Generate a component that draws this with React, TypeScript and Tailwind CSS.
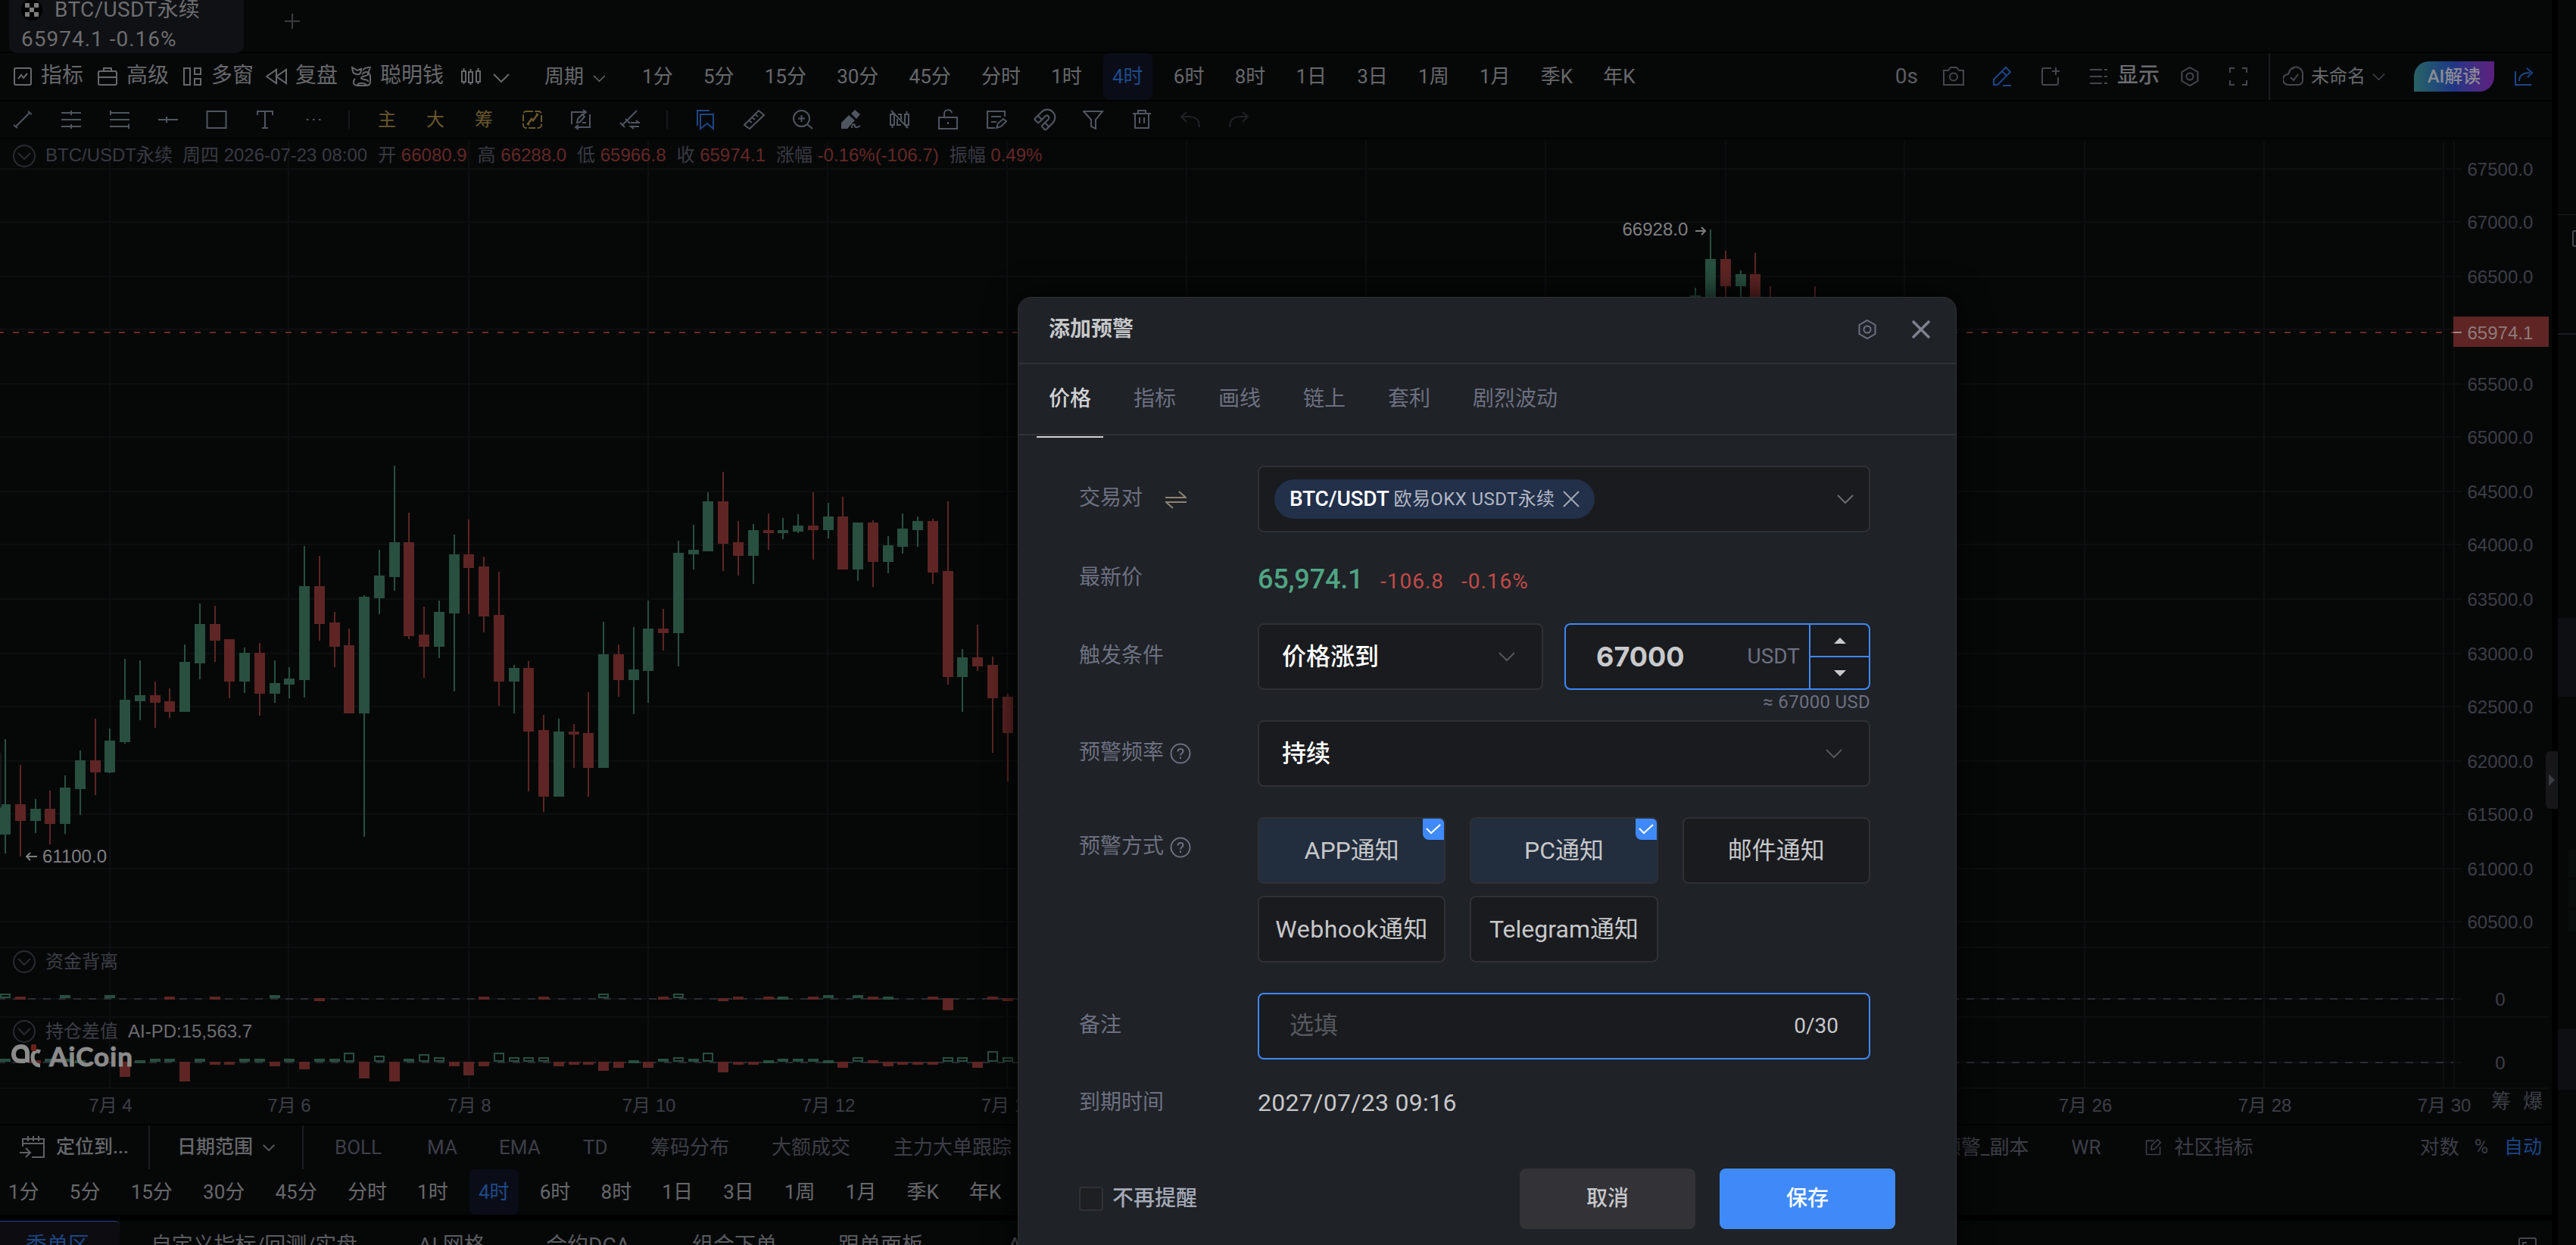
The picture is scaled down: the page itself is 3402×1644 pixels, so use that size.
import React from 'react';
import { Magnet } from 'lucide-react';

type IconProps = { children: React.ReactNode; className?: string; size?: string };

function Icon({ children, className = '', size = 'h-7 w-7' }: IconProps) {
  return (
    <svg
      viewBox="0 0 28 28"
      fill="none"
      stroke="currentColor"
      strokeWidth="2"
      className={`shrink-0 ${size} ${className}`}
    >
      {children}
    </svg>
  );
}

const hexagon = (
  <>
    <path d="M14 2l10.5 6v12L14 26 3.5 20V8z" />
    <circle cx="14" cy="14" r="4.5" />
  </>
);

function Chevron({ className }: { className: string }) {
  return (
    <svg viewBox="0 0 22 12" fill="none" stroke="currentColor" strokeWidth="2" className={`shrink-0 ${className}`}>
      <path d="M1 1l10 10L21 1" />
    </svg>
  );
}

const PERIODS = ['1分', '5分', '15分', '30分', '45分', '分时', '1时', '4时', '6时', '8时', '1日', '3日', '1周', '1月', '季K', '年K'];

function Periods({ className = '' }: { className?: string }) {
  return (
    <div className={`flex h-full gap-[16.2px] text-[26px] text-[#67686b] ${className}`}>
      {PERIODS.map((p) => (
        <div
          key={p}
          className={`flex items-center rounded-lg px-3 ${p === '4时' ? 'bg-[#0a0d17] text-[#1f4a8a]' : ''}`}
        >
          {p}
        </div>
      ))}
    </div>
  );
}

/* ---------- top bars ---------- */

function TabBar() {
  return (
    <div className="flex h-[68px] shrink-0 bg-[#060808]">
      <div className="relative z-10 ml-3 h-[70px] w-[310px] rounded-b-[10px] bg-[#101114] pl-4 text-[28px] leading-[38px] text-[#6c6d70]">
        <div className="-mt-[6px] flex items-center">
          <svg viewBox="0 0 28 28" className="mr-4 h-7 w-7">
            <circle cx="14" cy="14" r="14" fill="#000" />
            <path d="M5 5h6v6H5zM17 5h6v6h-6zM11 11h6v6h-6zM5 17h6v6H5zM17 17h6v6h-6z" fill="#7d7d7d" />
          </svg>
          <span className="tracking-[0.35px]">BTC/USDT永续</span>
        </div>
        <div className="mt-px tracking-[1px]">65974.1 -0.16%</div>
      </div>
      <svg viewBox="0 0 20 20" className="mt-[18px] ml-[54px] h-5 w-5" stroke="#3a3c40" strokeWidth="2">
        <path d="M10 0v20M0 10h20" />
      </svg>
    </div>
  );
}

function ChartToolbar() {
  return (
    <div className="mt-0.5 flex h-[62px] shrink-0 items-center bg-[#060808] pl-4 text-[28px] whitespace-nowrap text-[#67686b]">
      <Icon>
        <rect x="3" y="3" width="22" height="22" rx="2" />
        <path d="M8 17l4-5 3 4 5-6" />
      </Icon>
      <span className="-mt-0.5 ml-[10px]">指标</span>
      <Icon className="ml-[18px]">
        <rect x="2" y="7" width="24" height="18" rx="2" />
        <path d="M9 7V3h10v4M2 15h24" />
      </Icon>
      <span className="-mt-0.5 ml-[11px]">高级</span>
      <Icon className="ml-[17px]">
        <rect x="3" y="3" width="8" height="22" />
        <rect x="17" y="3" width="8" height="8" />
        <rect x="17" y="17" width="8" height="8" />
      </Icon>
      <span className="-mt-0.5 ml-[11px]">多窗</span>
      <Icon className="ml-4">
        <path d="M14 5v18L1 14zM27 5v18L14 14z" />
      </Icon>
      <span className="-mt-0.5 ml-[11px]">复盘</span>
      <Icon className="ml-[18px]">
        <path d="M1 2c1 7 1 8 6 9s6-3 6-7l-5 2zM15 6c2-3 4-4 11-4M14 11c5-5 9-3 8 0s-9 2-9 5 10 1 9 5M25 4c-4 3-2 6 0 9v8c0 4-3 5-6 5H8c-5 0-7-5-3-9" />
        <path d="M8 25c2-3 9-3 12 0" />
      </Icon>
      <span className="-mt-0.5 ml-[10px]">聪明钱</span>
      <Icon className="ml-[22px]">
        <rect x="2" y="7" width="5" height="14" />
        <rect x="11" y="8" width="5" height="14" />
        <rect x="21" y="7" width="5" height="14" />
        <path d="M4.5 3v4M4.5 21v3M13.5 4v4M13.5 22v3M23.5 3v4M23.5 21v3" />
      </Icon>
      <Chevron className="mt-1 ml-[15px] h-3 w-[22px]" />
      <span className="ml-[46px] text-[26px]">周期</span>
      <Chevron className="mt-1 ml-3 h-[9px] w-[17px]" />
      <Periods className="ml-9" />
      <div className="flex-1" />
      <span className="text-[#5c5d60]">0s</span>
      <div className="ml-[33px] flex items-center text-[#44464c]">
        <Icon>
          <path d="M1 6h6l3-4h8l3 4h6v19H1z" />
          <circle cx="14" cy="14.5" r="5" />
        </Icon>
        <Icon className="ml-[36px] text-[#1d4684]">
          <path d="M3 25v-7L19 2l6 6L8 25zM14 7l6 6M15 26h11" />
        </Icon>
        <Icon className="ml-[36px]">
          <path d="M15 3H5a2 2 0 0 0-2 2v18a2 2 0 0 0 2 2h17a2 2 0 0 0 2-2v-8M21 2v10M16 7h10" />
        </Icon>
        <Icon className="ml-[36px]">
          <path d="M2 5h16M2 14h16M2 23h16M21 5h4M21 14h4M21 23h4" />
        </Icon>
        <span className="-mt-0.5 ml-[10px] font-medium text-[#6b6c6e]">显示</span>
        <Icon className="ml-[26px]">{hexagon}</Icon>
        <Icon className="ml-[36px]">
          <path d="M9 3H3v6M19 3h6v6M9 25H3v-6M19 25h6v-6" />
        </Icon>
        <div className="ml-[26px] h-[62px] w-0.5 bg-[#1b1c1f]" />
        <Icon className="ml-[17px]">
          <path d="M8 10a9 9 0 0 1 18 1v8a6 6 0 0 1-6 6H7a6.500 6.500 0 0 1 0-14c1-5 4-8 8-8M10 15l4 4 6-8" />
        </Icon>
        <span className="ml-[9px] text-[24px] text-[#67686b]">未命名</span>
        <Chevron className="ml-[9px] h-[9px] w-[17px]" />
        <div className="ml-[38px] flex h-10 w-[106px] items-center justify-center rounded-tl-[20px] rounded-br-[20px] bg-linear-to-r from-[#296264] via-[#203585] to-[#5c1f80] text-[24px] font-medium text-[#8a8b94]">
          AI解读
        </div>
        <Icon className="mr-[23px] ml-[25px] text-[#1d4684]">
          <path d="M3 7v18h21M8 20c0-8 5-11 14-11M18 3l7 6-6 6" />
        </Icon>
      </div>
    </div>
  );
}

function Cell({ children, className = '' }: { children: React.ReactNode; className?: string }) {
  return <div className={`flex w-16 shrink-0 items-center justify-center ${className}`}>{children}</div>;
}

function DrawingToolbar() {
  return (
    <div className="mt-0.5 flex h-12 shrink-0 items-center bg-[#060808] text-[24px] text-[#4f5560]">
      <div className="-ml-0.5 flex items-center">
        <Cell>
          <Icon>
            <path d="M5 23L23 5M2 21l5 4M21 3l5 4" />
          </Icon>
        </Cell>
        <Cell>
          <Icon>
            <path d="M1 5h26M1 14h26M1 23h26M14 2v6M14 20v6" />
          </Icon>
        </Cell>
        <Cell>
          <Icon>
            <path d="M1 5h26M1 14h26M1 23h26M2 2v6M26 20v6" />
          </Icon>
        </Cell>
        <Cell>
          <Icon>
            <path d="M1 14h26M12 10v8" />
          </Icon>
        </Cell>
        <Cell>
          <Icon>
            <rect x="1.5" y="3" width="25" height="22" />
          </Icon>
        </Cell>
        <Cell>
          <Icon>
            <path d="M4 8V3h20v5M14 3v22M10 25h8" />
          </Icon>
        </Cell>
        <Cell>
          <Icon>
            <path d="M5 14h2.5M13 14h2.5M21 14h2.5" />
          </Icon>
        </Cell>
        <div className="ml-[14px] h-6 w-0.5 bg-[#17181b]" />
      </div>
      <div className="ml-[17px] flex items-center text-[#6a582c]">
        <Cell>主</Cell>
        <Cell>大</Cell>
        <Cell>筹</Cell>
        <Cell>
          <Icon>
            <rect x="2" y="3" width="24" height="22" rx="4" strokeDasharray="9 2.5" />
            <path d="M8 20l5-7 2 2 6-8M7 19l3 2M19 6l3 2" strokeWidth="2.5" />
          </Icon>
        </Cell>
        <Cell className="text-[#4f5560]">
          <Icon>
            <path d="M2 20V4h18M17 1l4 3-4 3M26 7v17H8M11 21l-4 3 4 3M9 18l1-5 6-6 3 3-6 7zM16 18h5" />
          </Icon>
        </Cell>
        <Cell className="text-[#4f5560]">
          <Icon>
            <path d="M4 22L24 2M2 18l6 6M9 13l6 6M16 18h11l-4-3M27 23H16l4 3" />
          </Icon>
        </Cell>
        <div className="ml-[17px] h-6 w-0.5 bg-[#17181b]" />
      </div>
      <div className="ml-[18px] flex items-center">
        <Cell className="text-[#1d4684]">
          <Icon>
            <path d="M3 22V2h16M7 7h17v19l-8-7-9 7z" />
          </Icon>
        </Cell>
        <Cell>
          <Icon>
            <path d="M1 21L20 2l7 6L8 26zM7 15l4 3M11 11l4 3M15 7l4 3" />
          </Icon>
        </Cell>
        <Cell>
          <Icon>
            <circle cx="12.5" cy="12.5" r="10.5" />
            <path d="M20 20l7 6M12.5 8v9M8 12.5h9" />
          </Icon>
        </Cell>
        <Cell>
          <Icon>
            <path d="M1 26v-8L11 8l8 7-10 11zM14 6l5-5 7 6-5 6z" fill="currentColor" stroke="none" />
            <path d="M15 25c0-6 4-6 4-3s3 3 7 0" />
          </Icon>
        </Cell>
        <Cell>
          <Icon>
            <path d="M2 7v14h5V7zM4.5 3v4M4.5 21v4M21 7v14h5V7zM23.5 3v4M23.5 21v4M11 13v8h5M12 7h4v7M3 2l22 23" />
          </Icon>
        </Cell>
        <Cell>
          <Icon>
            <rect x="2" y="11" width="24" height="15" />
            <path d="M9 11V6c0-6 9-6 10-1M14 17v3" />
          </Icon>
        </Cell>
        <Cell>
          <Icon>
            <path d="M12 25H2V3h23v7M7 10h13M7 17h7M14 25l2-6 7-6 4 3-7 7z" />
          </Icon>
        </Cell>
        <Cell>
          <Magnet className="h-8 w-8" strokeWidth={1.6} />
        </Cell>
        <Cell>
          <Icon>
            <path d="M1 3h25L17 14v12l-6-3V14z" />
          </Icon>
        </Cell>
        <Cell>
          <Icon>
            <path d="M2 6h24M9 6V2h10v4M5 6v19h18V6M11 11v8M17 11v8" />
          </Icon>
        </Cell>
        <Cell className="text-[#1f2124]">
          <Icon>
            <path d="M9 4L2 10l7 7M2 10h10c9 0 14 5 14 14" />
          </Icon>
        </Cell>
        <Cell className="text-[#1f2124]">
          <Icon>
            <path d="M19 4l7 6-7 7M26 10H16C7 10 2 15 2 24" />
          </Icon>
        </Cell>
      </div>
    </div>
  );
}

/* ---------- chart ---------- */

const GREEN = '#284f40';
const RED = '#5e2524';

/* [index, rising, wick top, body top, body bottom, wick bottom] */
const CANDLES: [number, 0 | 1, number, number, number, number][] = [
  [0, 1, 976, 1062, 1102, 1127], [1, 0, 1010, 1062, 1084, 1131], [2, 1, 1055, 1068, 1084, 1100],
  [3, 0, 1044, 1068, 1088, 1115], [4, 1, 1024, 1040, 1088, 1101], [5, 1, 991, 1004, 1042, 1076],
  [6, 0, 949, 1004, 1020, 1050], [7, 1, 962, 978, 1020, 1021], [8, 1, 870, 924, 980, 982],
  [9, 1, 872, 918, 926, 951], [10, 0, 900, 918, 928, 961], [11, 0, 909, 926, 940, 948],
  [12, 1, 851, 874, 940, 940], [13, 1, 797, 824, 876, 897], [14, 0, 800, 824, 846, 874],
  [15, 0, 844, 844, 900, 922], [16, 1, 855, 862, 900, 915], [17, 0, 849, 862, 916, 945],
  [18, 1, 872, 902, 916, 928], [19, 1, 881, 896, 904, 922], [20, 1, 721, 774, 898, 921],
  [21, 0, 734, 774, 824, 846], [22, 0, 808, 822, 854, 881], [23, 0, 830, 852, 942, 942],
  [24, 1, 786, 788, 942, 1105], [25, 1, 726, 760, 790, 811], [26, 1, 615, 716, 762, 780],
  [27, 0, 677, 716, 840, 844], [28, 0, 801, 838, 854, 895], [29, 1, 793, 808, 854, 869],
  [30, 1, 706, 732, 810, 913], [31, 0, 686, 732, 750, 811], [32, 0, 735, 748, 814, 835],
  [33, 0, 755, 812, 900, 932], [34, 1, 878, 882, 900, 942], [35, 0, 873, 882, 966, 1045],
  [36, 0, 944, 964, 1052, 1072], [37, 1, 949, 966, 1052, 1052], [38, 0, 956, 966, 970, 1014],
  [39, 0, 914, 968, 1014, 1052], [40, 1, 821, 864, 1014, 1014], [41, 0, 851, 864, 898, 920],
  [42, 1, 828, 884, 898, 943], [43, 1, 793, 830, 886, 928], [44, 0, 804, 830, 836, 859],
  [45, 1, 714, 730, 836, 880], [46, 1, 693, 726, 732, 752], [47, 1, 650, 662, 728, 728],
  [48, 0, 623, 662, 718, 754], [49, 0, 688, 716, 734, 760], [50, 1, 692, 700, 734, 771],
  [51, 0, 678, 700, 704, 726], [52, 1, 684, 700, 704, 712], [53, 1, 679, 694, 702, 704],
  [54, 0, 650, 694, 700, 739], [55, 1, 664, 682, 700, 711], [56, 0, 656, 682, 752, 752],
  [57, 1, 690, 690, 752, 767], [58, 0, 687, 690, 742, 775], [59, 1, 708, 720, 742, 757],
  [60, 1, 678, 698, 722, 731], [61, 1, 682, 688, 700, 722], [62, 0, 685, 688, 756, 771],
  [63, 0, 662, 754, 894, 904], [64, 1, 857, 868, 894, 940], [65, 0, 825, 868, 880, 886],
  [66, 0, 867, 878, 922, 994], [67, 0, 916, 920, 968, 1032], [113, 1, 380, 390, 400, 400],
  [114, 1, 303, 342, 400, 400], [115, 0, 331, 342, 378, 400], [116, 1, 357, 362, 378, 400],
  [117, 0, 334, 362, 400, 400], [118, 0, 378, 398, 400, 400], [121, 0, 378, 398, 400, 400],
];

/* [index, kind, top, bottom]; kind: g filled green, o outlined green, r red */
type Bar = [number, 'g' | 'o' | 'r', number, number];

const FLOW_BARS: Bar[] = [
  [0, 'o', 1312, 1318], [1, 'r', 1316, 1320], [4, 'g', 1314, 1318], [7, 'g', 1314, 1318], [11, 'r', 1316, 1320],
  [14, 'r', 1316, 1320], [18, 'g', 1314, 1318], [21, 'r', 1318, 1322], [32, 'r', 1316, 1320], [36, 'r', 1316, 1320],
  [40, 'o', 1312, 1318], [44, 'r', 1316, 1320], [45, 'o', 1312, 1318], [48, 'r', 1318, 1322], [49, 'r', 1316, 1320],
  [51, 'r', 1316, 1320], [52, 'g', 1316, 1320], [54, 'r', 1316, 1320], [55, 'g', 1314, 1318], [57, 'g', 1314, 1318],
  [58, 'r', 1316, 1320], [59, 'g', 1316, 1320], [62, 'r', 1316, 1320], [63, 'r', 1318, 1334], [66, 'r', 1316, 1320],
  [67, 'r', 1318, 1322],
];

const POSITION_BARS: Bar[] = [
  [0, 'g', 1398, 1402], [2, 'r', 1400, 1404], [3, 'g', 1398, 1402], [4, 'g', 1398, 1402], [5, 'g', 1400, 1404],
  [8, 'r', 1402, 1422], [9, 'g', 1400, 1404], [10, 'g', 1398, 1402], [11, 'g', 1398, 1402], [12, 'r', 1402, 1428],
  [13, 'g', 1398, 1402], [14, 'r', 1402, 1406], [15, 'r', 1402, 1406], [16, 'g', 1398, 1402], [17, 'g', 1398, 1402],
  [18, 'r', 1402, 1408], [19, 'g', 1398, 1402], [20, 'r', 1402, 1412], [21, 'g', 1398, 1402], [22, 'g', 1398, 1402],
  [23, 'o', 1390, 1402], [24, 'r', 1402, 1424], [25, 'o', 1394, 1402], [26, 'r', 1402, 1428], [27, 'g', 1398, 1402],
  [28, 'o', 1392, 1402], [29, 'o', 1396, 1402], [30, 'r', 1402, 1408], [31, 'r', 1402, 1420], [32, 'r', 1402, 1408],
  [33, 'o', 1390, 1402], [34, 'o', 1396, 1402], [35, 'o', 1396, 1402], [36, 'o', 1396, 1402], [37, 'r', 1402, 1408],
  [38, 'r', 1402, 1406], [39, 'r', 1402, 1406], [40, 'r', 1402, 1414], [41, 'r', 1402, 1410], [42, 'g', 1400, 1404],
  [43, 'r', 1402, 1410], [44, 'g', 1398, 1402], [45, 'o', 1396, 1402], [46, 'g', 1398, 1402], [47, 'o', 1390, 1402],
  [48, 'r', 1402, 1416], [49, 'r', 1402, 1406], [50, 'r', 1402, 1406], [51, 'g', 1400, 1404], [52, 'g', 1398, 1402],
  [53, 'g', 1398, 1402], [54, 'g', 1398, 1402], [55, 'g', 1400, 1404], [56, 'r', 1402, 1410], [57, 'o', 1396, 1402],
  [58, 'r', 1400, 1404], [59, 'r', 1402, 1408], [60, 'r', 1402, 1406], [61, 'r', 1402, 1406], [62, 'r', 1402, 1406],
  [63, 'o', 1396, 1402], [64, 'o', 1396, 1402], [65, 'r', 1402, 1410], [66, 'o', 1388, 1402], [67, 'o', 1396, 1402],
];

const PRICE_LEVELS: [string, number][] = [
  ['67500.0', 223], ['67000.0', 293], ['66500.0', 365], ['', 435], ['65500.0', 507], ['65000.0', 577],
  ['64500.0', 649], ['64000.0', 719], ['63500.0', 791], ['63000.0', 863], ['62500.0', 933], ['62000.0', 1005],
  ['61500.0', 1075], ['61000.0', 1147], ['60500.0', 1217],
];

const DATES: [string, number][] = [
  ['7月 4', 145], ['7月 6', 381], ['7月 8', 619], ['7月 10', 856], ['7月 12', 1093], ['7月 14', 1330], ['', 1567],
  ['', 1804], ['', 2041], ['', 2279], ['', 2515], ['7月 26', 2753], ['7月 28', 2990], ['7月 30', 3227],
];

const centre = (i: number) => Math.round(7 + i * 19.755);

function Bars({ bars }: { bars: Bar[] }) {
  return (
    <>
      {bars.map(([i, kind, top, bottom]) =>
        kind === 'o' ? (
          <rect key={i} x={centre(i) - 6} y={top + 1} width={12} height={bottom - top - 2} fill="#060808" stroke={GREEN} strokeWidth={2} />
        ) : (
          <rect key={i} x={centre(i) - 7} y={top} width={14} height={bottom - top} fill={kind === 'g' ? GREEN : RED} />
        ),
      )}
    </>
  );
}

function Toggle({ y }: { y: number }) {
  return (
    <g fill="none" stroke="#2a2b30" strokeWidth="2">
      <circle cx="32" cy={y} r="14" />
      <path d={`M24 ${y - 4}l8 8 8-8`} />
    </g>
  );
}

const LEGEND: [string, string][] = [
  ['开', '66080.9'],
  ['高', '66288.0'],
  ['低', '65966.8'],
  ['收', '65974.1'],
  ['涨幅', '-0.16%(-106.7)'],
  ['振幅', '0.49%'],
];

function Chart() {
  return (
    <div className="relative mt-0.5 h-[1300px] shrink-0 overflow-hidden bg-[#060808] font-['Liberation_Sans','Noto_Sans_CJK_SC',sans-serif]">
      <svg viewBox="0 184 3370 1300" className="block h-[1300px] w-[3370px]" fontSize="24" shapeRendering="crispEdges">
        <g stroke="#0d0e10" strokeWidth="2">
          {PRICE_LEVELS.map(([, y]) => (
            <path key={y} d={`M0 ${y}H3251`} />
          ))}
          {DATES.map(([, x]) => (
            <path key={x} d={`M${x} 186V1437`} />
          ))}
          <path d="M3241 186V1437M0 1251H3366M0 1343H3366M0 1437H3366M0 1319H3251M0 1403H3251" />
        </g>
        <path d="M-3 1319H3240M-3 1403H3240" stroke="#2b2c32" strokeWidth="2" strokeDasharray="10 10" />
        <path d="M-3 439H3240" stroke="#6b2a28" strokeWidth="2" strokeDasharray="8 12" />
        {CANDLES.map(([i, up, wt, bt, bb, wb]) => (
          <g key={i} fill={up ? GREEN : RED}>
            <rect x={centre(i) - 1} y={wt} width={2} height={wb - wt} />
            <rect x={centre(i) - 7} y={bt} width={14} height={bb - bt} />
          </g>
        ))}
        <Bars bars={FLOW_BARS} />
        <Bars bars={POSITION_BARS} />
        <g shapeRendering="auto">
          <g fill="#3d3e46">
            {PRICE_LEVELS.map(([t, y]) => (
              <text key={y} x="3258.5" y={y + 9}>{t}</text>
            ))}
            <text x="3302" y="1328" textAnchor="middle">0</text>
            <text x="3302" y="1412" textAnchor="middle">0</text>
            {DATES.map(([t, x]) => (
              <text key={x} x={x + 1} y="1468" textAnchor="middle">{t}</text>
            ))}
            <text x="3290" y="1463" fontSize="26">筹</text>
            <text x="3332" y="1463" fontSize="26">爆</text>
            <text x="60" y="1278">资金背离</text>
            <text x="60" y="1370">持仓差值</text>
          </g>
          <text x="169" y="1370" fill="#6d6d70">AI-PD:15,563.7</text>
          <Toggle y={206} />
          <Toggle y={1270} />
          <Toggle y={1362} />
          <rect x="3240" y="418" width="126" height="40" fill="#5e2524" />
          <path d="M3240 439h11" stroke="#9a8584" strokeWidth="2" />
          <text x="3258.5" y="448" fill="#8f7a79">65974.1</text>
          <g fill="#7f7f80">
            <text x="2142.5" y="311">66928.0</text>
            <text x="56" y="1139">61100.0</text>
          </g>
          <path d="M2239 305h13M2247 300l5 5-5 5M49 1131H35M40 1126l-5 5 5 5" stroke="#7f7f80" strokeWidth="2" fill="none" />
          <g fill="none" stroke="#8b8b8b" strokeWidth="6">
            <path d="M36 1403v-12c0-6-3-9-8-9-6 0-10 4-10 10s4 9 9 9h6" />
            <path d="M53 1389c-6-3-10 1-10 7s4 11 10 11" strokeWidth="5" />
          </g>
          <rect x="41" y="1379" width="7" height="9" rx="2" fill="#6b2018" />
          <text x="65" y="1408" fontSize="35" fontWeight="700" fill="#8b8b8b" fontFamily="Lato, sans-serif" textLength="110" stroke="#8b8b8b" strokeWidth="1">
            AiCoin
          </text>
          <rect x="-6" y="993" width="8" height="74" rx="3" fill="#161719" />
        </g>
      </svg>
      <div className="absolute top-[3px] left-[60px] flex h-9 items-center text-[24px] whitespace-pre text-[#393a42]">
        <span>BTC/USDT永续</span>
        <span className="ml-[13px]">周四 2026-07-23 08:00</span>
        {LEGEND.map(([k, v]) => (
          <span key={k} className="ml-[14px]">
            {k} <span className="text-[#642726]">{v}</span>
          </span>
        ))}
      </div>
    </div>
  );
}

/* ---------- bottom bars ---------- */

function BottomBars() {
  return (
    <>
      <div className="mt-0.5 flex h-[58px] shrink-0 items-center bg-[#060808] text-[26px] whitespace-nowrap text-[#3d3e46]">
        <svg viewBox="0 0 34 30" className="ml-[26px] h-[30px] w-[34px] shrink-0 text-[#606164]" fill="none" stroke="currentColor" strokeWidth="2">
          <path d="M4 14V4h28v24H16M4 10h28M11 0v7M18 0v7M25 0v7M0 22h13M8 16l6 6-6 6" />
        </svg>
        <span className="ml-3.5 w-[96px] text-[25px] font-medium text-[#67686b]">定位到...</span>
        <div className="ml-[26px] h-full w-0.5 bg-[#1b1c1f]" />
        <span className="ml-[36px] w-[100px] text-[25px] font-medium text-[#67686b]">日期范围</span>
        <Chevron className="ml-[13px] h-[9px] w-4 text-[#67686b]" />
        <div className="ml-[36px] h-full w-0.5 bg-[#1b1c1f]" />
        <span className="ml-[41px] w-[122px]">BOLL</span>
        <span className="w-[95px]">MA</span>
        <span className="w-[111px]">EMA</span>
        <span className="w-[89px]">TD</span>
        <span className="w-[160px]">筹码分布</span>
        <span className="w-[161px]">大额成交</span>
        <span className="w-[160px]">主力大单跟踪</span>
        <div className="flex-1" />
        <span>预警_副本</span>
        <span className="ml-[56px]">WR</span>
        <Icon className="ml-[58px]" size="h-[22px] w-[22px]">
          <path d="M15 3H2v23h23V13M10 18l1-7L21 1l5 5-10 11z" />
        </Icon>
        <span className="ml-[17px]">社区指标</span>
        <span className="ml-[220px]">对数</span>
        <span className="ml-[20px] text-[25px]">%</span>
        <span className="mr-[13px] ml-[21px] text-[25px] text-[#1d4684]">自动</span>
      </div>
      <div className="h-[60px] shrink-0 bg-[#060808]">
        <Periods className="-ml-px" />
      </div>
      <div className="mt-2 flex flex-1 overflow-hidden bg-[#060808] text-[28px] leading-[40px] whitespace-nowrap text-[#5a5b5f]">
        <div className="w-[158px] shrink-0 rounded-tr-md border-t border-[#1d4684] bg-[#0d0d11] pt-[12px] pl-[34px] text-[#1d4684]">委单区</div>
        <div className="flex pt-[13px]">
          <span className="ml-[41px] w-[353px] tracking-[-0.2px]">自定义指标/回测/实盘</span>
          <span className="w-[169px]">AI 网格</span>
          <span className="w-[193px]">合约DCA</span>
          <span className="w-[193px]">组合下单</span>
          <span className="w-[224px]">跟单面板</span>
          <span>AI</span>
        </div>
        <svg viewBox="0 0 24 24" className="mt-[22px] mr-[20px] ml-auto h-6 w-6" fill="none" stroke="#44464c" strokeWidth="2">
          <rect x="1" y="1" width="22" height="22" rx="2" />
          <path d="M6 12V7h5" />
        </svg>
      </div>
    </>
  );
}

function SideStrip() {
  return (
    <div className="relative ml-2 flex w-6 shrink-0 flex-col bg-[#060808]">
      <div className="h-[284px] border-b border-[#1b1c1f]" />
      <div className="flex h-[158px] items-start justify-end overflow-hidden border-b-2 border-[#1b1c1f] pt-5">
        <div className="h-[22px] w-[5px] rounded-l-[3px] border-2 border-r-0 border-[#44464c]" />
      </div>
      <div className="mt-[374px] h-[104px] bg-[#0e0f12]" />
      <div className="mt-[202px] ml-3.5 flex flex-col gap-1">
        <div className="h-9 bg-[#090e0d]" />
        <div className="h-9 bg-[#090e0d]" />
        <div className="h-7 bg-[#090e0d]" />
      </div>
      <div className="mt-[129px] h-20 bg-[#0e0f12]" />
      <div className="absolute top-[992px] -left-4 flex h-[76px] w-4 items-center justify-center rounded-l-md bg-[#171719]">
        <svg viewBox="0 0 8 16" className="h-4 w-2">
          <path d="M0 0l8 8-8 8z" fill="#3a3d44" />
        </svg>
      </div>
    </div>
  );
}

/* ---------- alert dialog ---------- */

function Label({ children, className = 'h-[86px]' }: { children: React.ReactNode; className?: string }) {
  return <div className={`flex w-[236px] shrink-0 items-center text-[28px] text-[#6c7080] ${className}`}>{children}</div>;
}

function Help() {
  return (
    <svg viewBox="0 0 28 28" className="mt-0.5 ml-[8px] h-7 w-7" fill="none" stroke="currentColor" strokeWidth="2">
      <circle cx="14" cy="14" r="12.5" />
      <path d="M10.5 11.5c0-5 7-4.5 7-.5 0 2.5-3.5 2.5-3.5 5.5M14 18.5v2.5" />
    </svg>
  );
}

const METHODS: { name: string; on: boolean; spacing?: string }[] = [
  { name: 'APP通知', on: true },
  { name: 'PC通知', on: true },
  { name: '邮件通知', on: false },
  { name: 'Webhook通知', on: false, spacing: 'tracking-[0.5px]' },
  { name: 'Telegram通知', on: false },
];

function AlertDialog() {
  return (
    <div className="absolute top-[392px] left-[1344px] h-[1300px] w-[1240px] rounded-[18px] border border-[#2d3034] bg-[#1f2227] shadow-[0_0_40px_rgba(0,0,0,0.9)]">
      <div className="flex h-[88px] items-center border-b-2 border-[#2f3135] pr-[34px] pl-10 text-[28px] font-bold text-[#c6c7c9]">
        <span className="-mt-0.5">添加预警</span>
        <Icon className="-mt-0.5 ml-auto text-[#6c7080]">{hexagon}</Icon>
        <svg viewBox="0 0 24 24" className="-mt-0.5 ml-[45px] h-6 w-6" stroke="#7d818f" strokeWidth="3.5">
          <path d="M1 1l22 22M23 1L1 23" />
        </svg>
      </div>
      <div className="relative flex h-[94px] gap-14 border-b-2 border-[#2f3135] pl-10 text-[28px] leading-[91px] text-[#6c7080]">
        <span className="font-medium text-[#d0d1d3]">价格</span>
        <span>指标</span>
        <span>画线</span>
        <span>链上</span>
        <span>套利</span>
        <span>剧烈波动</span>
        <div className="absolute -bottom-[5px] left-6 h-0.5 w-[88px] bg-[#d0d1d3]" />
      </div>

      <div className="pt-10 pl-20">
        <div className="flex">
          <Label className="h-[85px]">
            交易对
            <svg viewBox="0 0 28 24" className="mt-1 ml-[30px] h-6 w-7" fill="none" stroke="#8c8371" strokeWidth="2">
              <path d="M0 9h27L18 1M28 15H1l9 8" />
            </svg>
          </Label>
          <div className="flex h-[88px] w-[809px] items-center rounded-lg border-2 border-[#2f3035] bg-[#1a1b1f] px-5">
            <div className="flex h-[52px] items-center rounded-full bg-[#22304a] px-5 text-[28px] whitespace-nowrap text-white">
              <span className="font-medium tracking-[-0.2px]">BTC/USDT</span>
              <span className="ml-1.5 w-[217px] text-[24px] tracking-[0.4px] text-[#b2b7c4]">欧易OKX USDT永续</span>
              <svg viewBox="0 0 22 22" className="ml-1.5 h-[22px] w-[22px]" stroke="#a3a8b5" strokeWidth="2">
                <path d="M1 1l20 20M21 1L1 21" />
              </svg>
            </div>
            <Chevron className="ml-auto h-3 w-[22px] text-[#6c6d72]" />
          </div>
        </div>

        <div className="flex h-[120px] items-center">
          <Label className="h-[82px]">最新价</Label>
          <div className="mt-1 flex items-baseline">
            <span className="w-[162px] text-[36px] font-medium tracking-[-0.2px] text-[#4fa583]">65,974.1</span>
            <span className="w-[107px] text-[28px] tracking-[1px] text-[#c14a47]">-106.8</span>
            <span className="text-[28px] tracking-[1px] text-[#c14a47]">-0.16%</span>
          </div>
        </div>

        <div className="flex h-[128px] items-start">
          <Label>触发条件</Label>
          <div className="flex h-[88px] w-[377px] items-center rounded-lg border-2 border-[#2f3035] bg-[#1a1b1f] pr-[35px] pl-[30px] text-[32px] font-medium text-white">
            <span>价格涨到</span>
            <Chevron className="ml-auto h-3 w-[22px] text-[#55575c]" />
          </div>
          <div className="ml-7">
            <div className="flex h-[88px] w-[404px] items-center overflow-hidden rounded-lg border-2 border-[#3f87f5] bg-[#1a1b1f] pl-10">
              <span className="font-['Inter'] text-[36px] font-bold text-[#c9cacc]">67000</span>
              <span className="mr-3 ml-auto text-[28px] text-[#6c7080]">USDT</span>
              <div className="flex h-full w-[79px] flex-col border-l-2 border-[#3f87f5]">
                <div className="flex flex-1 items-center justify-center border-b-2 border-[#3f87f5]">
                  <svg viewBox="0 0 16 8" className="h-2 w-4" fill="#c9cacc"><path d="M8 0l8 8H0z" /></svg>
                </div>
                <div className="flex flex-1 items-center justify-center">
                  <svg viewBox="0 0 16 8" className="h-2 w-4" fill="#c9cacc"><path d="M0 0h16L8 8z" /></svg>
                </div>
              </div>
            </div>
            <div className="text-right text-[24px] leading-[32px] tracking-[0.3px] text-[#6c7080]">≈ 67000 USD</div>
          </div>
        </div>

        <div className="flex">
          <Label>预警频率<Help /></Label>
          <div className="flex h-[88px] w-[809px] items-center rounded-lg border-2 border-[#2f3035] bg-[#1a1b1f] pr-[35px] pl-[30px] text-[32px] font-medium text-white">
            <span>持续</span>
            <Chevron className="ml-auto h-3 w-[22px] text-[#55575c]" />
          </div>
        </div>

        <div className="mt-10 flex">
          <Label className="h-[78px]">预警方式<Help /></Label>
          <div className="grid w-[809px] grid-cols-3 gap-x-8 gap-y-4">
            {METHODS.map(({ name, on, spacing = '' }) => (
              <div
                key={name}
                className={`relative flex h-[88px] items-center justify-center rounded-lg border-2 border-[#2f3035] text-[32px] whitespace-nowrap text-[#c6c7c9] ${spacing} ${on ? 'bg-[#222d3d]' : 'bg-[#1a1b1f]'}`}
              >
                {name}
                {on && (
                  <div className="absolute top-0 right-0 flex h-7 w-7 items-center justify-center rounded-tr-md rounded-bl-lg bg-[#3f8af8]">
                    <svg viewBox="0 0 20 14" className="h-3.5 w-5" fill="none" stroke="#fff" strokeWidth="2">
                      <path d="M1 6l6 6L19 1" />
                    </svg>
                  </div>
                )}
              </div>
            ))}
          </div>
        </div>

        <div className="mt-10 flex">
          <Label>备注</Label>
          <div className="flex h-[88px] w-[809px] items-center justify-between rounded-lg border-2 border-[#3f87f5] bg-[#1a1b1f] px-10 text-[32px] text-[#56585e]">
            <span className="-mt-0.5">选填</span>
            <span className="text-[28px] text-[#c6c7c9]">0/30</span>
          </div>
        </div>

        <div className="flex h-[114px] items-center">
          <Label>到期时间</Label>
          <span className="text-[32px] tracking-[0.3px] text-[#c6c7c9]">2027/07/23 09:16</span>
        </div>

        <div className="mt-[30px] flex h-20 items-center text-[28px]">
          <div className="h-8 w-8 rounded border-2 border-[#303136] bg-[#1d1f23]" />
          <span className="ml-[12px] font-medium text-[#a4a9b6]">不再提醒</span>
          <div className="ml-[426px] flex h-20 w-[232px] items-center justify-center rounded-lg bg-[#323237] font-medium text-[#c6c7c9]">取消</div>
          <div className="ml-8 flex h-20 w-[232px] items-center justify-center rounded-lg bg-[#3f8af8] font-medium text-white">保存</div>
        </div>
      </div>
    </div>
  );
}

export default function App() {
  return (
    <div className="relative flex h-[1644px] w-[3402px] overflow-hidden bg-black font-[Roboto,'Noto_Sans_CJK_SC',sans-serif]">
      <div className="flex w-[3370px] shrink-0 flex-col">
        <TabBar />
        <ChartToolbar />
        <DrawingToolbar />
        <Chart />
        <BottomBars />
      </div>
      <SideStrip />
      <AlertDialog />
    </div>
  );
}
